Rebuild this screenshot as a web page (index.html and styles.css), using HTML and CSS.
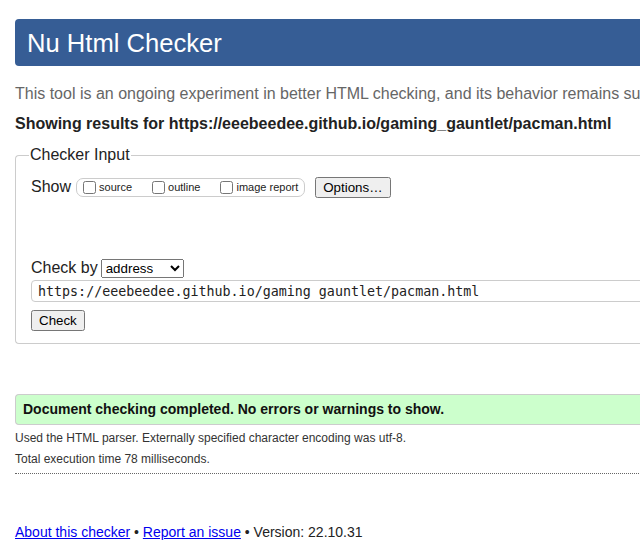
FILE: index.html
```html
<!DOCTYPE html>
<html>
<head>
<meta charset="utf-8">
<title>Nu Html Checker</title>
<link rel="stylesheet" href="styles.css">
</head>
<body>
<div class="page">
  <h1 class="title">Nu Html Checker</h1>
  <p class="intro">This tool is an ongoing experiment in better HTML checking, and its behavior remains subject to change</p>
  <p class="showing">Showing results for https://eeebeedee.github.io/gaming_gauntlet/pacman.html</p>
  <form class="form">
    <fieldset class="checker">
      <legend class="legend">Checker Input</legend>
      <div class="show-row">
        <span class="show-label">Show</span>
        <span class="opts">
          <label class="opt"><input type="checkbox" class="cb"><span>source</span></label>
          <label class="opt"><input type="checkbox" class="cb"><span>outline</span></label>
          <label class="opt"><input type="checkbox" class="cb"><span>image report</span></label>
        </span>
        <button type="button" class="btn">Options…</button>
      </div>
      <div class="checkby-row">
        <span class="checkby-label">Check by</span>
        <select class="select"><option>address</option></select>
      </div>
      <input type="text" class="url" value="https://eeebeedee.github.io/gaming gauntlet/pacman.html">
      <div class="submit-row"><button type="button" class="btn">Check</button></div>
    </fieldset>
  </form>
  <div class="results">
    <p class="success">Document checking completed. No errors or warnings to show.</p>
  </div>
  <p class="details">Used the HTML parser. Externally specified character encoding was utf-8.</p>
  <p class="details">Total execution time 78 milliseconds.</p>
  <hr class="rule">
  <p class="footer"><a href="#">About this checker</a> • <a href="#">Report an issue</a> • Version: 22.10.31</p>
</div>
</body>
</html>
```

FILE: styles.css
```css
html {
  overflow: hidden;
}
body {
  margin: 0;
  font-family: "Liberation Sans", Arial, sans-serif;
  color: #222;
  background: #fff;
}
.page {
  width: 900px;
  padding: 19px 0 0 15px;
}
.title {
  margin: 0;
  height: 47px;
  box-sizing: border-box;
  padding: 8px 12px 0;
  background: #365d95;
  color: #fff;
  font-weight: normal;
  font-size: 25.6px;
  line-height: 32px;
  border-radius: 4px 0 0 4px;
}
.intro {
  margin: 19px 0 0;
  font-size: 16px;
  line-height: 18px;
  color: #666;
  white-space: nowrap;
}
.showing {
  margin: 12px 0 0;
  font-size: 16px;
  line-height: 18px;
  font-weight: bold;
  white-space: nowrap;
}
.form {
  margin: 13px 0 0;
}
.checker {
  margin: 0;
  padding: 4px 15px 12px;
  border: 1px solid #ccc;
  border-radius: 4px 0 0 4px;
  border-right: none;
}
.legend {
  padding: 0 1px;
  font-size: 16px;
  margin-left: -2px;
}
.show-row {
  display: flex;
  align-items: center;
  height: 22px;
  margin-top: 8px;
}
.show-label {
  font-size: 16px;
  margin-right: 5px;
}
.opts {
  display: inline-flex;
  align-items: center;
  height: 19px;
  box-sizing: border-box;
  border: 1px solid #ccc;
  border-radius: 7px;
  padding: 0 6px;
  font-size: 11px;
}
.opt {
  display: inline-flex;
  align-items: center;
  margin-right: 20px;
}
.opt:last-child {
  margin-right: 0;
}
.cb {
  margin: 0 3px 0 0;
  width: 13px;
  height: 13px;
}
.btn {
  font-family: "Liberation Sans", Arial, sans-serif;
  font-size: 13.33px;
  margin-left: 10px;
  padding: 1px 6px;
  height: 21px;
}
.checkby-row {
  display: flex;
  align-items: center;
  margin-top: 59px;
  height: 22px;
}
.checkby-label {
  font-size: 16px;
  margin-right: 3px;
}
.select {
  font-family: "Liberation Sans", Arial, sans-serif;
  font-size: 13.33px;
  width: 83px;
  height: 19px;
}
.url {
  display: block;
  box-sizing: border-box;
  width: 1000px;
  height: 22px;
  margin: 1px 0 0;
  padding: 1px 6px;
  border: 1px solid #ccc;
  border-radius: 4px;
  font-family: "DejaVu Sans Mono", monospace;
  font-size: 13.33px;
  color: #222;
}
.submit-row {
  margin-top: 8px;
}
.submit-row .btn {
  margin-left: 0;
}
.results {
  margin-top: 50px;
}
.success {
  margin: 0;
  height: 31px;
  box-sizing: border-box;
  padding: 0 7px;
  background: #ccffcc;
  border: 1px solid #ccc;
  border-right: none;
  border-radius: 4px 0 0 4px;
  font-size: 14px;
  font-weight: bold;
  line-height: 29px;
  color: #111;
}
.details {
  margin: 5px 0 0;
  font-size: 12px;
  line-height: 16px;
  color: #333;
}
.rule {
  margin: 6px 0 0;
  border: none;
  border-top: 1px dotted #666;
  height: 0;
}
.footer {
  margin: 49px 0 0;
  font-size: 14px;
  line-height: 18px;
}
.footer a {
  color: #00e;
}
```
